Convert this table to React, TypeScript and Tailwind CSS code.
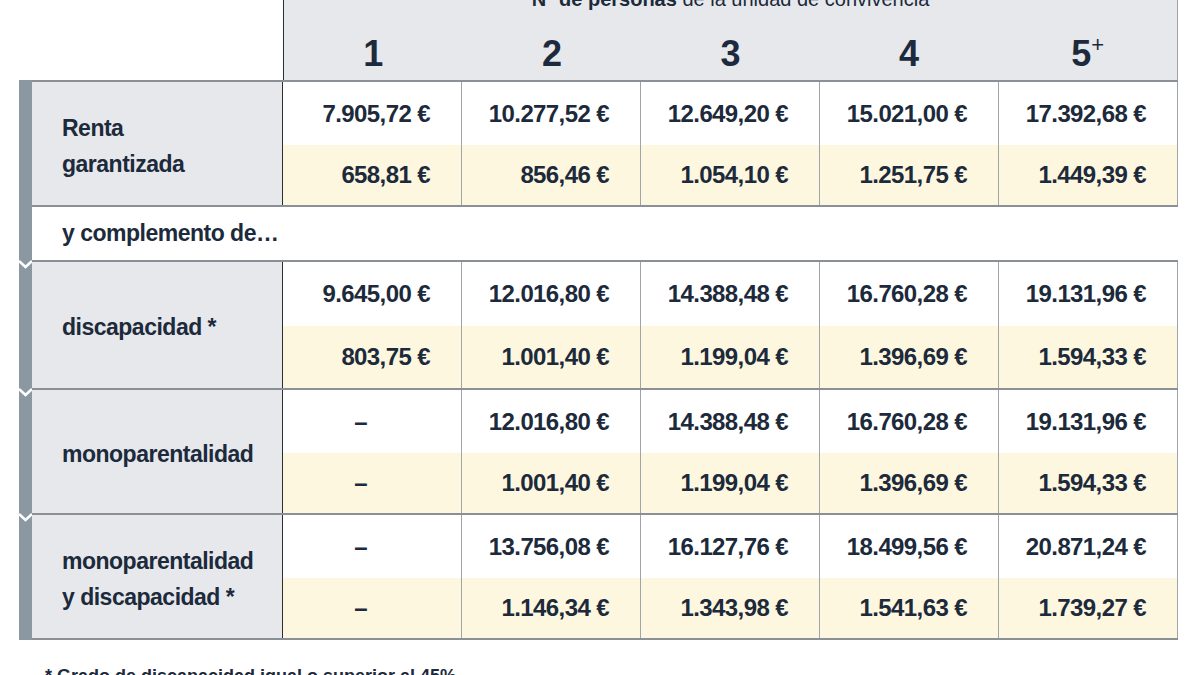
// Tabla de Renta garantizada por número de personas

const INK = "text-[#1c2a3b]";

type Group = {
  label: string[];
  top: string[];
  bottom: string[];
  h: number;
  topH: number;
  notch?: boolean;
};

const groups: Group[] = [
  {
    label: ["Renta", "garantizada"],
    top: ["7.905,72 €", "10.277,52 €", "12.649,20 €", "15.021,00 €", "17.392,68 €"],
    bottom: ["658,81 €", "856,46 €", "1.054,10 €", "1.251,75 €", "1.449,39 €"],
    h: 127,
    topH: 65,
  },
];

const complementos: Group[] = [
  {
    label: ["discapacidad *"],
    top: ["9.645,00 €", "12.016,80 €", "14.388,48 €", "16.760,28 €", "19.131,96 €"],
    bottom: ["803,75 €", "1.001,40 €", "1.199,04 €", "1.396,69 €", "1.594,33 €"],
    h: 128,
    topH: 64,
    notch: true,
  },
  {
    label: ["monoparentalidad"],
    top: ["–", "12.016,80 €", "14.388,48 €", "16.760,28 €", "19.131,96 €"],
    bottom: ["–", "1.001,40 €", "1.199,04 €", "1.396,69 €", "1.594,33 €"],
    h: 125,
    topH: 63,
    notch: true,
  },
  {
    label: ["monoparentalidad", "y discapacidad *"],
    top: ["–", "13.756,08 €", "16.127,76 €", "18.499,56 €", "20.871,24 €"],
    bottom: ["–", "1.146,34 €", "1.343,98 €", "1.541,63 €", "1.739,27 €"],
    h: 125,
    topH: 63,
    notch: true,
  },
];

function Bar({ notch }: { notch?: boolean }) {
  return (
    <div className="relative w-[13px] shrink-0 bg-[#8b98a2]">
      {notch && (
        <svg
          width="13"
          height="12"
          viewBox="0 0 13 12"
          className="absolute left-0 top-[-3px]"
        >
          <polyline
            points="0,2 6.5,8 13,2"
            fill="none"
            stroke="#ffffff"
            strokeWidth="2.5"
          />
        </svg>
      )}
    </div>
  );
}

function Cells({ values, shade }: { values: string[]; shade: boolean }) {
  return (
    <div className={`flex-1 grid grid-cols-5 ${shade ? "bg-[#fdf7df]" : "bg-white"}`}>
      {values.map((v, i) => (
        <div
          key={i}
          className={`flex items-center justify-end border-r border-[#9ea4a9] text-[24px] tracking-[-0.6px] font-bold tabular-nums whitespace-nowrap ${INK} ${
            v === "–" ? "pr-[94px]" : "pr-[31px]"
          }`}
        >
          {v}
        </div>
      ))}
    </div>
  );
}

function Row({ g, first }: { g: Group; first?: boolean }) {
  return (
    <div className="flex" style={{ height: g.h }}>
      <Bar notch={g.notch} />
      <div
        className={`flex flex-1 border-b-2 border-[#8a9095] ${
          first ? "border-t-2" : ""
        }`}
      >
        <div className="w-[251px] shrink-0 bg-[#e6e8ec] border-r border-[#2b2f33] flex flex-col justify-center pl-[30px] pt-[4px]">
          {g.label.map((l) => (
            <div
              key={l}
              className={`text-[23px] tracking-[-0.5px] font-bold leading-[36px] whitespace-nowrap ${INK}`}
            >
              {l}
            </div>
          ))}
        </div>
        <div className="flex-1 flex flex-col">
          <div className="flex" style={{ height: g.topH - (first ? 2 : 0) }}>
            <Cells values={g.top} shade={false} />
          </div>
          <div className="flex flex-1">
            <Cells values={g.bottom} shade={true} />
          </div>
        </div>
      </div>
    </div>
  );
}

export default function App() {
  return (
    <div
      className="w-[1200px] h-[675px] overflow-hidden bg-white"
      style={{ fontFamily: '"Liberation Sans", Arial, sans-serif' }}
    >
      {/* Cabecera */}
      <div className="ml-[283px] w-[895px] h-[80px] bg-[#e6e8ec] border-l border-[#2b2f33] border-r border-r-[#9ea4a9] flex flex-col">
        <div className={`-mt-[11px] h-[20px] leading-[20px] text-[20px] text-center ${INK}`}>
          <span className="font-bold">Nº de personas</span> de la unidad de convivencia
        </div>
        <div className="grid grid-cols-5 flex-1 items-center pt-[18px]">
          {["1", "2", "3", "4", "5"].map((n) => (
            <div key={n} className={`text-center text-[36px] leading-[40px] font-bold ${INK}`}>
              {n}
              {n === "5" && <sup className="text-[22px] font-normal top-[-14px]">+</sup>}
            </div>
          ))}
        </div>
      </div>

      {/* Cuerpo */}
      <div className="ml-[19px] w-[1159px]">
        {groups.map((g) => (
          <Row key={g.label.join()} g={g} first />
        ))}
        <div className="flex h-[55px]">
          <Bar />
          <div className="flex-1 bg-white border-b-2 border-[#8a9095] flex items-center pl-[30px]">
            <span className={`text-[23px] tracking-[-0.5px] font-bold ${INK}`}>y complemento de…</span>
          </div>
        </div>
        {complementos.map((g) => (
          <Row key={g.label.join()} g={g} />
        ))}
      </div>

      <p className={`mt-[27px] ml-[45px] text-[18px] leading-[18px] font-semibold ${INK}`}>
        * Grado de discapacidad igual o superior al 45%
      </p>
    </div>
  );
}
